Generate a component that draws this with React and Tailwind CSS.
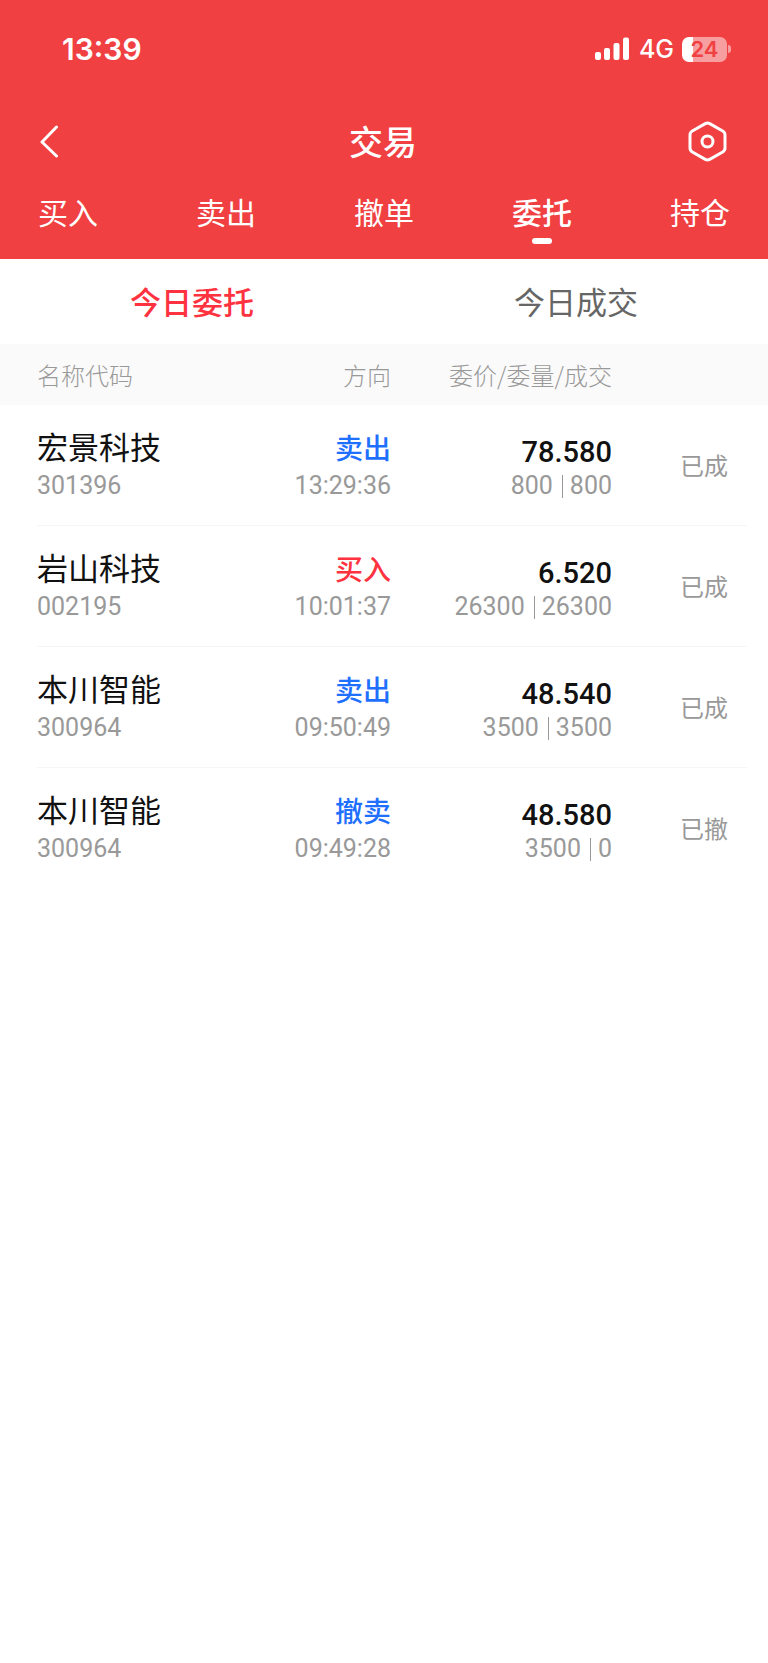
const TABS = ["买入", "卖出", "撤单", "委托", "持仓"];

const SIDE_COLOR = {
  buy: "text-[#ff333f]",
  sell: "text-[#1f70ff]",
};

const ORDERS = [
  { id: 1, name: "宏景科技", code: "301396", side: "sell", action: "卖出", time: "13:29:36", price: "78.580", amount: 800, filled: 800, status: "已成" },
  { id: 2, name: "岩山科技", code: "002195", side: "buy", action: "买入", time: "10:01:37", price: "6.520", amount: 26300, filled: 26300, status: "已成" },
  { id: 3, name: "本川智能", code: "300964", side: "sell", action: "卖出", time: "09:50:49", price: "48.540", amount: 3500, filled: 3500, status: "已成" },
  { id: 4, name: "本川智能", code: "300964", side: "sell", action: "撤卖", time: "09:49:28", price: "48.580", amount: 3500, filled: 0, status: "已撤" },
];

function StatusBar() {
  return (
    <div className="flex h-[98px] items-center justify-between pl-[62px] pr-[37px] font-['Inter',sans-serif]">
      <span className="text-[30px] font-semibold leading-none">13:39</span>
      <div className="flex items-center">
        <svg className="h-[24px] w-[34px]" viewBox="0 0 34 24" fill="currentColor" aria-hidden="true">
          <rect x="0" y="15" width="6" height="8" rx="2" />
          <rect x="9" y="11" width="6" height="12" rx="2" />
          <rect x="18.500" y="6" width="6" height="17" rx="2" />
          <rect x="28" y="0.500" width="6" height="22.500" rx="2" />
        </svg>
        <span className="ml-[10px] text-[25px] font-medium leading-none">4G</span>
        <div className="ml-[8px] flex items-center gap-px">
          <div className="flex h-[25px] w-[45px] items-center justify-center rounded-[7px] bg-[linear-gradient(to_right,#fff_24%,#f79fa0_24%)] text-[22px] font-semibold leading-none text-[#f04042]">
            24
          </div>
          <div className="h-[8px] w-[3px] rounded-r-full bg-[#f79fa0]" />
        </div>
      </div>
    </div>
  );
}

function NavBar() {
  return (
    <div className="flex h-[86px] items-center justify-between pl-[38px] pr-[40px]">
      <button type="button" aria-label="返回" className="w-[42px]">
        <svg className="h-[34px] w-[22px]" viewBox="0 0 22 34" fill="none" stroke="currentColor" strokeWidth="3" strokeLinecap="round" strokeLinejoin="round">
          <path d="M18.500 3 4 18l14.500 14" />
        </svg>
      </button>
      <h1 className="text-[34px] font-medium leading-none">交易</h1>
      <button type="button" aria-label="设置" className="flex w-[42px] justify-end">
        <svg className="h-[44px] w-[42px]" viewBox="0 -1 42 44" fill="none" stroke="currentColor" strokeWidth="3" strokeLinejoin="round">
          <path d="M19.300 3.600a4.500 4.500 0 0 1 4.400 0l13 7.400a4.500 4.500 0 0 1 2.300 3.900v13.200a4.500 4.500 0 0 1-2.300 3.900l-13 7.400a4.500 4.500 0 0 1-4.400 0L6.300 32A4.500 4.500 0 0 1 4 28.100V14.900A4.500 4.500 0 0 1 6.300 11z" />
          <circle cx="21.500" cy="21.500" r="5.500" />
        </svg>
      </button>
    </div>
  );
}

function TradeTabs({ active }) {
  return (
    <nav className="flex h-[75px] items-start justify-between px-[38px]">
      {TABS.map((tab) => (
        <button key={tab} type="button" className="flex flex-col items-center">
          <span className={`text-[30px] leading-[54px] ${tab === active ? "font-medium" : "font-normal"}`}>
            {tab}
          </span>
          {tab === active && <span className="h-[6px] w-[20px] rounded-full bg-white" />}
        </button>
      ))}
    </nav>
  );
}

function OrderRow({ order, last }) {
  const cell = `flex h-[121px] flex-col border-b ${last ? "border-transparent" : "border-[#f6f6f6]"}`;
  return (
    <tr>
      <td className="p-0 pl-[37px]">
        <div className={`${cell} pt-[20px]`}>
          <span className="text-[31px] leading-[42px] text-[#111]">{order.name}</span>
          <span className="font-['Roboto',sans-serif] text-[25px] leading-[38px] text-[#999]">{order.code}</span>
        </div>
      </td>
      <td className="p-0">
        <div className={`${cell} items-end pt-[22px]`}>
          <span className={`text-[28px] font-medium leading-[40px] ${SIDE_COLOR[order.side]}`}>{order.action}</span>
          <span className="font-['Roboto',sans-serif] text-[25px] leading-[38px] text-[#999]">{order.time}</span>
        </div>
      </td>
      <td className="p-0">
        <div className={`${cell} items-end pt-[30px] font-['Roboto',sans-serif]`}>
          <span className="text-[29px] font-medium leading-[34px] text-[#111]">{order.price}</span>
          <span className="flex items-center text-[25px] leading-[34px] text-[#999]">
            {order.amount}
            <i className="ml-[9px] mr-[7px] h-[23px] w-px bg-[#999]" />
            {order.filled}
          </span>
        </div>
      </td>
      <td className="p-0 pr-[21px]">
        <div className={`${cell} items-end justify-center pr-[19px]`}>
          <span className="text-[24px] leading-none text-[#999]">{order.status}</span>
        </div>
      </td>
    </tr>
  );
}

export default function App() {
  return (
    <div className="min-h-screen bg-white font-['Noto_Sans_CJK_SC',sans-serif]">
      <header className="bg-[#f04042] text-white">
        <StatusBar />
        <NavBar />
        <TradeTabs active="委托" />
      </header>

      <div className="grid h-[85px] grid-cols-2 text-[31px]">
        <button type="button" className="font-medium text-[#ff333f]">今日委托</button>
        <button type="button" className="text-[#666]">今日成交</button>
      </div>

      <table className="w-full table-fixed border-collapse">
        <thead className="bg-[#fafafa]">
          <tr className="h-[61px] text-[24px] leading-none text-[#999]">
            <th className="p-0 pl-[37px] text-left font-light">名称代码</th>
            <th className="w-[170px] p-0 text-right font-light">方向</th>
            <th className="w-[221px] p-0 text-right font-light">委价/委量/成交</th>
            <th className="w-[156px] p-0" aria-label="状态" />
          </tr>
        </thead>
        <tbody>
          {ORDERS.map((order, i) => (
            <OrderRow key={order.id} order={order} last={i === ORDERS.length - 1} />
          ))}
        </tbody>
      </table>
    </div>
  );
}
